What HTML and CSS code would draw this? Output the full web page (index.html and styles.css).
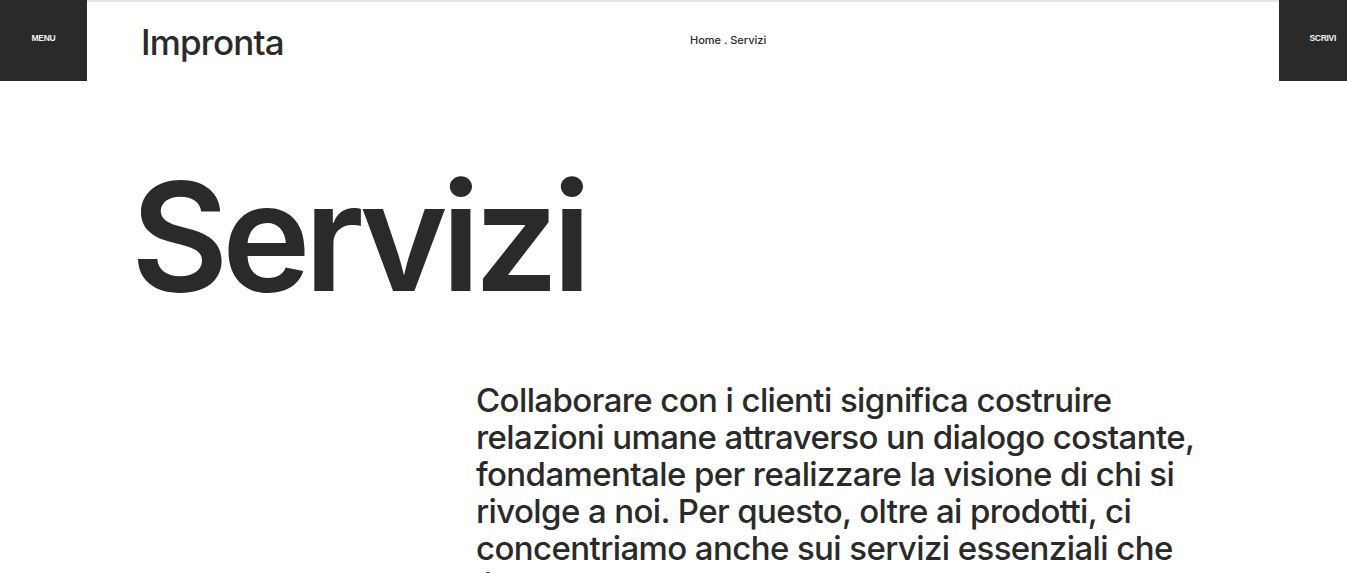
FILE: index.html
```html
<!DOCTYPE html>
<html lang="it">
<head>
<meta charset="utf-8">
<title>Servizi - Impronta</title>
<link rel="stylesheet" href="styles.css">
</head>
<body>
<header class="header">
  <button class="side-btn menu-btn">MENU</button>
  <div class="header-main">
    <a class="logo" href="#">Impronta</a>
    <nav class="breadcrumb">Home . Servizi</nav>
  </div>
  <button class="side-btn write-btn">SCRIVI</button>
</header>
<main class="content">
  <h1 class="title">Servizi</h1>
  <p class="intro">Collaborare con i clienti significa costruire relazioni umane attraverso un dialogo costante, fondamentale per realizzare la visione di chi si rivolge a noi. Per questo, oltre ai prodotti, ci concentriamo anche sui servizi essenziali che li&nbsp;accompagnano.</p>
</main>
</body>
</html>
```
FILE: styles.css
```css
* { box-sizing: border-box; }
html, body { margin: 0; padding: 0; background: #fff; }
body {
  font-family: Inter, "Liberation Sans", sans-serif;
  color: #2a2a2a;
  overflow: hidden;
  height: 573px;
}
.header {
  display: flex;
  height: 81px;
  border-top: 2px solid #e6e6e6;
}
.side-btn {
  background: #2a2a2a;
  color: #f2f2f2;
  border: 0;
  margin-top: -2px;
  height: 81px;
  font-family: "Liberation Sans", Arial, sans-serif;
  font-weight: 700;
  font-size: 8.5px;
  letter-spacing: -0.3px;
  padding: 0;
  display: flex;
  align-items: center;
  padding-bottom: 5px;
}
.menu-btn { width: 87px; justify-content: center; }
.write-btn { width: 68px; justify-content: flex-end; padding-right: 11px; }
.header-main {
  flex: 1;
  display: flex;
  align-items: center;
  padding-left: 54px;
}
.logo {
  font-size: 35px;
  font-weight: 500;
  letter-spacing: -0.8px;
  color: #2a2a2a;
  text-decoration: none;
  width: 549px;
  padding-top: 1px;
}
.breadcrumb {
  font-size: 11px;
  font-weight: 500;
  color: #2a2a2a;
  padding-bottom: 4px;
}
.content {
  padding-left: 136px;
}
.title {
  margin: 81px 0 0 -5px;
  font-size: 150px;
  font-weight: 600;
  letter-spacing: -6.5px;
  line-height: 1;
}
.intro {
  margin: 70px 0 0 340px;
  width: 735px;
  font-size: 33px;
  font-weight: 500;
  line-height: 37px;
  letter-spacing: -0.6px;
}
```
